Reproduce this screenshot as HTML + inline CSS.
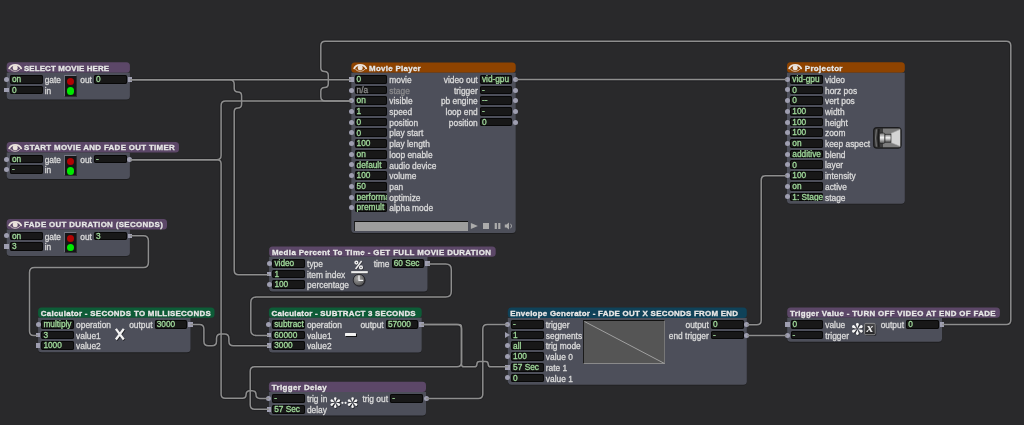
<!DOCTYPE html><html><head><meta charset="utf-8"><style>

html,body{margin:0;padding:0;}
body{width:1024px;height:425px;background:#29292b;position:relative;overflow:hidden;font-family:"Liberation Sans",sans-serif;}
#root{position:absolute;left:0;top:0;width:1024px;height:425px;will-change:transform;}
.tb{position:absolute;height:10.4px;border-radius:3.5px;}
.tt{position:absolute;height:10.4px;line-height:10.4px;padding-top:1.3px;font-size:7.9px;font-weight:bold;color:#e8e8e8;white-space:nowrap;transform-origin:0 50%;text-shadow:0 0 1px rgba(0,0,0,.45);-webkit-text-stroke:0.35px #e8e8e8;}
.bd{position:absolute;background:#4d4f5a;border-radius:0 0 3.5px 3.5px;box-shadow:0 0.8px 0.8px rgba(0,0,0,0.28);}
.fd{position:absolute;height:8.8px;background:#181818;border-radius:2px;box-shadow:inset 0 0 0 0.9px #070707;overflow:hidden;font-size:8.3px;line-height:8.8px;white-space:nowrap;text-indent:2.0px;}
.fd span{position:relative;top:0.2px;-webkit-text-stroke:0.3px currentColor;}
.lb{position:absolute;height:8.8px;line-height:8.8px;padding-top:1px;font-size:8.4px;white-space:nowrap;-webkit-text-stroke:0.3px currentColor;}
.pc{position:absolute;width:5px;height:5px;border-radius:50%;background:#9e9eb0;}
.ps{position:absolute;width:4.8px;height:4.8px;background:#9e9eb0;}

</style></head><body><div id="root">
<svg style="position:absolute;left:0;top:0" width="1024" height="425"><g fill="none" stroke="#1f1f21" stroke-width="3.4" opacity="0.7">
<path d="M130 79.7 L351 79.7"/>
<path d="M130 79.7 L229.70 79.70 Q234.2 79.7 234.20 84.20 L234.20 88.30 Q234.2 92 237.90 92.00 L237.90 92.00 Q241.6 92 241.60 95.70 L241.60 104.30 Q241.6 108 237.90 108.00 L237.90 108.00 Q234.2 108 234.20 111.70 L234.20 270.20 Q234.2 274.7 238.70 274.70 L269 274.7"/>
<path d="M130 159.7 L216.60 159.70 Q221.1 159.7 221.10 155.20 L221.10 105.40 Q221.1 100.9 225.60 100.90 L352 100.9"/>
<path d="M130 159.7 L217.10 159.70 Q221.1 159.7 221.10 163.70 L221.10 394.30 Q221.1 398.3 225.10 398.30 L242.30 398.30 Q246.1 398.3 246.10 394.50 L246.10 394.50 Q246.1 390.7 249.90 390.70 L252.10 390.70 Q256 390.7 256.00 394.60 L256.00 394.60 Q256 398.5 259.90 398.50 L269 398.5"/>
<path d="M130 235.8 L143.40 235.80 Q148.4 235.8 148.40 240.80 L148.40 262.60 Q148.4 267.6 143.40 267.60 L34.50 267.60 Q29.5 267.6 29.50 272.60 L29.50 331.15 Q29.5 335.4 33.75 335.40 L38 335.4"/>
<path d="M190.5 324.5 L199.40 324.50 Q203.9 324.5 203.90 329.00 L203.90 341.30 Q203.9 345.8 208.40 345.80 L212.00 345.80 Q216.5 345.8 216.50 341.30 L216.50 338.50 Q216.5 334 221.00 334.00 L224.40 334.00 Q228.9 334 228.90 338.50 L228.90 341.30 Q228.9 345.8 233.40 345.80 L269 345.8"/>
<path d="M427.5 263.9 L445.80 263.90 Q451.3 263.9 451.30 269.40 L451.30 291.50 Q451.3 297 445.80 297.00 L256.30 297.00 Q250.8 297 250.80 302.50 L250.80 330.00 Q250.8 335.5 256.30 335.50 L269 335.5"/>
<path d="M421.5 324.6 L458.90 324.60 Q461.5 324.6 461.50 327.20 L461.50 364.20 Q461.5 366.8 464.10 366.80 L474.30 366.80 Q476.9 366.8 476.90 364.20 L476.90 364.20 Q476.9 361.6 479.50 361.60 L485.60 361.60 Q488.2 361.6 488.20 364.20 L488.20 364.20 Q488.2 366.8 490.80 366.80 L508 366.8"/>
<path d="M421.5 324.6 L457.00 324.60 Q461.5 324.6 461.50 329.10 L461.50 362.30 Q461.5 366.8 457.00 366.80 L254.70 366.80 Q250.2 366.8 250.20 371.30 L250.20 404.80 Q250.2 409.3 254.70 409.30 L269 409.3"/>
<path d="M426 398.4 L478.30 398.40 Q482.8 398.4 482.80 393.90 L482.80 329.10 Q482.8 324.6 487.30 324.60 L508 324.6"/>
<path d="M747 324.7 L756.70 324.70 Q761.2 324.7 761.20 320.20 L761.20 180.20 Q761.2 175.7 765.70 175.70 L787 175.7"/>
<path d="M747 335.4 L787 335.4"/>
<path d="M942 324.6 L1006.30 324.60 Q1010.8 324.6 1010.80 320.10 L1010.80 45.70 Q1010.8 41.2 1006.30 41.20 L325.30 41.20 Q320.8 41.2 320.80 45.70 L320.80 67.75 Q320.8 71.5 324.55 71.50 L324.55 71.50 Q328.3 71.5 328.30 75.25 L328.30 83.75 Q328.3 87.5 324.55 87.50 L324.55 87.50 Q320.8 87.5 320.80 91.25 L320.80 96.40 Q320.8 100.9 325.30 100.90 L352 100.9"/>
<path d="M515.7 79.5 L787 79.5"/>
</g></svg>
<svg style="position:absolute;left:0;top:0" width="1024" height="425"><rect x="6.7" y="62.3" width="123.2" height="10.4" rx="3.5" fill="#5c4768"/><path d="M6.7 72.7 H129.90 V95.90 Q129.90 99.40 126.40 99.40 H10.20 Q6.7 99.40 6.7 95.90 Z" fill="#000" opacity="0.28" transform="translate(0 0.9)"/><path d="M6.7 72.7 H129.90 V95.90 Q129.90 99.40 126.40 99.40 H10.20 Q6.7 99.40 6.7 95.90 Z" fill="#4d4f5a"/><rect x="6.7" y="142.1" width="172.3" height="10.4" rx="3.5" fill="#5c4768"/><path d="M6.7 152.5 H129.90 V175.50 Q129.90 179.00 126.40 179.00 H10.20 Q6.7 179.00 6.7 175.50 Z" fill="#000" opacity="0.28" transform="translate(0 0.9)"/><path d="M6.7 152.5 H129.90 V175.50 Q129.90 179.00 126.40 179.00 H10.20 Q6.7 179.00 6.7 175.50 Z" fill="#4d4f5a"/><rect x="6.7" y="219.0" width="160.3" height="10.4" rx="3.5" fill="#5c4768"/><path d="M6.7 229.4 H129.90 V252.40 Q129.90 255.90 126.40 255.90 H10.20 Q6.7 255.90 6.7 252.40 Z" fill="#000" opacity="0.28" transform="translate(0 0.9)"/><path d="M6.7 229.4 H129.90 V252.40 Q129.90 255.90 126.40 255.90 H10.20 Q6.7 255.90 6.7 252.40 Z" fill="#4d4f5a"/><rect x="351.3" y="62.4" width="164.4" height="10.4" rx="3.5" fill="#8e4300"/><path d="M351.3 72.8 H515.70 V229.50 Q515.70 233.00 512.20 233.00 H354.80 Q351.3 233.00 351.3 229.50 Z" fill="#000" opacity="0.28" transform="translate(0 0.9)"/><path d="M351.3 72.8 H515.70 V229.50 Q515.70 233.00 512.20 233.00 H354.80 Q351.3 233.00 351.3 229.50 Z" fill="#4d4f5a"/><rect x="787.0" y="62.3" width="117.8" height="10.4" rx="3.5" fill="#8e4300"/><path d="M787.0 72.7 H904.80 V200.20 Q904.80 203.70 901.30 203.70 H790.50 Q787.0 203.70 787.0 200.20 Z" fill="#000" opacity="0.28" transform="translate(0 0.9)"/><path d="M787.0 72.7 H904.80 V200.20 Q904.80 203.70 901.30 203.70 H790.50 Q787.0 203.70 787.0 200.20 Z" fill="#4d4f5a"/><rect x="269.1" y="246.4" width="226.6" height="10.4" rx="3.5" fill="#5c4768"/><path d="M269.1 256.8 H427.50 V288.00 Q427.50 291.50 424.00 291.50 H272.60 Q269.1 291.50 269.1 288.00 Z" fill="#000" opacity="0.28" transform="translate(0 0.9)"/><path d="M269.1 256.8 H427.50 V288.00 Q427.50 291.50 424.00 291.50 H272.60 Q269.1 291.50 269.1 288.00 Z" fill="#4d4f5a"/><rect x="268.9" y="307.4" width="152.8" height="10.4" rx="3.5" fill="#0d5c37"/><path d="M268.9 317.79999999999995 H421.70 V348.90 Q421.70 352.40 418.20 352.40 H272.40 Q268.9 352.40 268.9 348.90 Z" fill="#000" opacity="0.28" transform="translate(0 0.9)"/><path d="M268.9 317.79999999999995 H421.70 V348.90 Q421.70 352.40 418.20 352.40 H272.40 Q268.9 352.40 268.9 348.90 Z" fill="#4d4f5a"/><rect x="268.9" y="381.7" width="157.1" height="10.4" rx="3.5" fill="#5c4768"/><path d="M268.9 392.09999999999997 H426.00 V412.00 Q426.00 415.50 422.50 415.50 H272.40 Q268.9 415.50 268.9 412.00 Z" fill="#000" opacity="0.28" transform="translate(0 0.9)"/><path d="M268.9 392.09999999999997 H426.00 V412.00 Q426.00 415.50 422.50 415.50 H272.40 Q268.9 415.50 268.9 412.00 Z" fill="#4d4f5a"/><rect x="38.1" y="307.4" width="176.4" height="10.4" rx="3.5" fill="#0d5c37"/><path d="M38.1 317.79999999999995 H190.50 V348.80 Q190.50 352.30 187.00 352.30 H41.60 Q38.1 352.30 38.1 348.80 Z" fill="#000" opacity="0.28" transform="translate(0 0.9)"/><path d="M38.1 317.79999999999995 H190.50 V348.80 Q190.50 352.30 187.00 352.30 H41.60 Q38.1 352.30 38.1 348.80 Z" fill="#4d4f5a"/><rect x="507.8" y="307.5" width="239.0" height="10.4" rx="3.5" fill="#0f4259"/><path d="M507.8 317.9 H746.80 V381.20 Q746.80 384.70 743.30 384.70 H511.30 Q507.8 384.70 507.8 381.20 Z" fill="#000" opacity="0.28" transform="translate(0 0.9)"/><path d="M507.8 317.9 H746.80 V381.20 Q746.80 384.70 743.30 384.70 H511.30 Q507.8 384.70 507.8 381.20 Z" fill="#4d4f5a"/><rect x="787.2" y="307.4" width="212.7" height="10.4" rx="3.5" fill="#5c4768"/><path d="M787.2 317.79999999999995 H942.00 V338.30 Q942.00 341.80 938.50 341.80 H790.70 Q787.2 341.80 787.2 338.30 Z" fill="#000" opacity="0.28" transform="translate(0 0.9)"/><path d="M787.2 317.79999999999995 H942.00 V338.30 Q942.00 341.80 938.50 341.80 H790.70 Q787.2 341.80 787.2 338.30 Z" fill="#4d4f5a"/></svg>
<svg style="position:absolute;left:8.1px;top:62.9px" width="15" height="11" viewBox="0 0 15 11">
<path d="M1.2 5.4 C3.4 0.6, 11 0.6, 13.2 5.4" fill="none" stroke="#ebe3dd" stroke-width="1.8" stroke-linecap="round"/>
<path d="M2.2 5.9 C4.4 9.2, 10 9.2, 12.2 5.9" fill="none" stroke="#ebe3dd" stroke-width="0.9" stroke-linecap="round" opacity="0.85"/>
<circle cx="7.2" cy="4.7" r="2.5" fill="#ebe3dd"/></svg>
<div class="tt" style="left:23.9px;top:62.3px;letter-spacing:0.149px">SELECT MOVIE HERE</div>
<div class="fd" style="left:10.0px;top:74.8px;width:32.5px;"><span style="color:#9fd99a">on</span></div>
<div class="lb" style="left:44.7px;top:74.8px;color:#dadada">gate</div>
<div class="pc" style="left:4.2px;top:76.7px"></div>
<div class="fd" style="left:10.0px;top:85.5px;width:32.5px;"><span style="color:#9fd99a">0</span></div>
<div class="lb" style="left:44.7px;top:85.5px;color:#dadada">in</div>
<div class="ps" style="left:4.300000000000001px;top:87.5px"></div>
<div class="fd" style="left:94.10000000000001px;top:74.8px;width:32.5px;"><span style="color:#9fd99a">0</span></div>
<div class="lb" style="right:932.1px;top:74.8px;color:#dadada">out</div>
<div class="ps" style="left:127.5px;top:76.8px"></div>
<div style="position:absolute;left:63.6px;top:75.4px;width:13.2px;height:21.2px;background:#151517;border-style:solid;border-width:1.3px 1px 1px 1.3px;border-color:#777985 #2c2c30 #2c2c30 #6a6c78;box-sizing:border-box"></div>
<div style="position:absolute;left:66.6px;top:78.0px;width:7.4px;height:7.4px;border-radius:50%;background:#b00404"></div>
<div style="position:absolute;left:66.6px;top:87.2px;width:7.6px;height:7.6px;border-radius:50%;background:#00e800"></div>
<svg style="position:absolute;left:8.1px;top:142.7px" width="15" height="11" viewBox="0 0 15 11">
<path d="M1.2 5.4 C3.4 0.6, 11 0.6, 13.2 5.4" fill="none" stroke="#ebe3dd" stroke-width="1.8" stroke-linecap="round"/>
<path d="M2.2 5.9 C4.4 9.2, 10 9.2, 12.2 5.9" fill="none" stroke="#ebe3dd" stroke-width="0.9" stroke-linecap="round" opacity="0.85"/>
<circle cx="7.2" cy="4.7" r="2.5" fill="#ebe3dd"/></svg>
<div class="tt" style="left:24.1px;top:142.1px;letter-spacing:0.329px">START MOVIE AND FADE OUT TIMER</div>
<div class="fd" style="left:10.0px;top:154.6px;width:32.5px;"><span style="color:#9fd99a">on</span></div>
<div class="lb" style="left:44.7px;top:154.6px;color:#dadada">gate</div>
<div class="pc" style="left:4.2px;top:156.5px"></div>
<div class="fd" style="left:10.0px;top:165.29999999999998px;width:32.5px;"><span style="color:#9fd99a">-</span></div>
<div class="lb" style="left:44.7px;top:165.29999999999998px;color:#dadada">in</div>
<div class="pc" style="left:4.2px;top:167.2px"></div>
<div class="fd" style="left:94.10000000000001px;top:154.6px;width:32.5px;"><span style="color:#9fd99a">-</span></div>
<div class="lb" style="right:932.1px;top:154.6px;color:#dadada">out</div>
<div class="pc" style="left:127.4px;top:156.5px"></div>
<div style="position:absolute;left:63.6px;top:155.2px;width:13.2px;height:21.2px;background:#151517;border-style:solid;border-width:1.3px 1px 1px 1.3px;border-color:#777985 #2c2c30 #2c2c30 #6a6c78;box-sizing:border-box"></div>
<div style="position:absolute;left:66.6px;top:157.79999999999998px;width:7.4px;height:7.4px;border-radius:50%;background:#b00404"></div>
<div style="position:absolute;left:66.6px;top:167.0px;width:7.6px;height:7.6px;border-radius:50%;background:#00e800"></div>
<svg style="position:absolute;left:8.1px;top:219.6px" width="15" height="11" viewBox="0 0 15 11">
<path d="M1.2 5.4 C3.4 0.6, 11 0.6, 13.2 5.4" fill="none" stroke="#ebe3dd" stroke-width="1.8" stroke-linecap="round"/>
<path d="M2.2 5.9 C4.4 9.2, 10 9.2, 12.2 5.9" fill="none" stroke="#ebe3dd" stroke-width="0.9" stroke-linecap="round" opacity="0.85"/>
<circle cx="7.2" cy="4.7" r="2.5" fill="#ebe3dd"/></svg>
<div class="tt" style="left:24.1px;top:219.0px;letter-spacing:0.349px">FADE OUT DURATION (SECONDS)</div>
<div class="fd" style="left:10.0px;top:231.5px;width:32.5px;"><span style="color:#9fd99a">on</span></div>
<div class="lb" style="left:44.7px;top:231.5px;color:#dadada">gate</div>
<div class="pc" style="left:4.2px;top:233.4px"></div>
<div class="fd" style="left:10.0px;top:242.2px;width:32.5px;"><span style="color:#9fd99a">3</span></div>
<div class="lb" style="left:44.7px;top:242.2px;color:#dadada">in</div>
<div class="ps" style="left:4.300000000000001px;top:244.2px"></div>
<div class="fd" style="left:94.10000000000001px;top:231.5px;width:32.5px;"><span style="color:#9fd99a">3</span></div>
<div class="lb" style="right:932.1px;top:231.5px;color:#dadada">out</div>
<div class="ps" style="left:127.5px;top:233.5px"></div>
<div style="position:absolute;left:63.6px;top:232.0px;width:13.2px;height:21.2px;background:#151517;border-style:solid;border-width:1.3px 1px 1px 1.3px;border-color:#777985 #2c2c30 #2c2c30 #6a6c78;box-sizing:border-box"></div>
<div style="position:absolute;left:66.6px;top:234.6px;width:7.4px;height:7.4px;border-radius:50%;background:#b00404"></div>
<div style="position:absolute;left:66.6px;top:243.8px;width:7.6px;height:7.6px;border-radius:50%;background:#00e800"></div>
<svg style="position:absolute;left:352.7px;top:63.0px" width="15" height="11" viewBox="0 0 15 11">
<path d="M1.2 5.4 C3.4 0.6, 11 0.6, 13.2 5.4" fill="none" stroke="#ebe3dd" stroke-width="1.8" stroke-linecap="round"/>
<path d="M2.2 5.9 C4.4 9.2, 10 9.2, 12.2 5.9" fill="none" stroke="#ebe3dd" stroke-width="0.9" stroke-linecap="round" opacity="0.85"/>
<circle cx="7.2" cy="4.7" r="2.5" fill="#ebe3dd"/></svg>
<div class="tt" style="left:369.1px;top:62.4px;letter-spacing:0.300px">Movie Player</div>
<div class="fd" style="left:354.6px;top:74.9px;width:32.5px;"><span style="color:#9fd99a">0</span></div>
<div class="lb" style="left:389.3px;top:74.9px;color:#dadada">movie</div>
<div class="ps" style="left:348.90000000000003px;top:76.9px"></div>
<div class="fd" style="left:354.6px;top:85.60000000000001px;width:32.5px;"><span style="color:#8a8a8a">n/a</span></div>
<div class="lb" style="left:389.3px;top:85.60000000000001px;color:#8a8a8c">stage</div>
<div class="pc" style="left:348.8px;top:87.50000000000001px"></div>
<div class="fd" style="left:354.6px;top:96.30000000000001px;width:32.5px;"><span style="color:#9fd99a">on</span></div>
<div class="lb" style="left:389.3px;top:96.30000000000001px;color:#dadada">visible</div>
<div class="pc" style="left:348.8px;top:98.20000000000002px"></div>
<div class="fd" style="left:354.6px;top:107.0px;width:32.5px;"><span style="color:#9fd99a">1</span></div>
<div class="lb" style="left:389.3px;top:107.0px;color:#dadada">speed</div>
<div class="pc" style="left:348.8px;top:108.9px"></div>
<div class="fd" style="left:354.6px;top:117.7px;width:32.5px;"><span style="color:#9fd99a">0</span></div>
<div class="lb" style="left:389.3px;top:117.7px;color:#dadada">position</div>
<div class="pc" style="left:348.8px;top:119.60000000000001px"></div>
<div class="fd" style="left:354.6px;top:128.4px;width:32.5px;"><span style="color:#9fd99a">0</span></div>
<div class="lb" style="left:389.3px;top:128.4px;color:#dadada">play start</div>
<div class="pc" style="left:348.8px;top:130.3px"></div>
<div class="fd" style="left:354.6px;top:139.1px;width:32.5px;"><span style="color:#9fd99a">100</span></div>
<div class="lb" style="left:389.3px;top:139.1px;color:#dadada">play length</div>
<div class="pc" style="left:348.8px;top:141.0px"></div>
<div class="fd" style="left:354.6px;top:149.8px;width:32.5px;"><span style="color:#9fd99a">on</span></div>
<div class="lb" style="left:389.3px;top:149.8px;color:#dadada">loop enable</div>
<div class="pc" style="left:348.8px;top:151.70000000000002px"></div>
<div class="fd" style="left:354.6px;top:160.5px;width:32.5px;"><span style="color:#9fd99a">default</span></div>
<div class="lb" style="left:389.3px;top:160.5px;color:#dadada">audio device</div>
<div class="pc" style="left:348.8px;top:162.4px"></div>
<div class="fd" style="left:354.6px;top:171.2px;width:32.5px;"><span style="color:#9fd99a">100</span></div>
<div class="lb" style="left:389.3px;top:171.2px;color:#dadada">volume</div>
<div class="pc" style="left:348.8px;top:173.1px"></div>
<div class="fd" style="left:354.6px;top:181.9px;width:32.5px;"><span style="color:#9fd99a">50</span></div>
<div class="lb" style="left:389.3px;top:181.9px;color:#dadada">pan</div>
<div class="pc" style="left:348.8px;top:183.8px"></div>
<div class="fd" style="left:354.6px;top:192.6px;width:32.5px;"><span style="color:#9fd99a">performance</span></div>
<div class="lb" style="left:389.3px;top:192.6px;color:#dadada">optimize</div>
<div class="pc" style="left:348.8px;top:194.5px"></div>
<div class="fd" style="left:354.6px;top:203.29999999999998px;width:32.5px;"><span style="color:#9fd99a">premult</span></div>
<div class="lb" style="left:389.3px;top:203.29999999999998px;color:#dadada">alpha mode</div>
<div class="pc" style="left:348.8px;top:205.2px"></div>
<div class="fd" style="left:479.9000000000001px;top:74.9px;width:32.5px;"><span style="color:#9fd99a">vid-gpu</span></div>
<div class="lb" style="right:546.3px;top:74.9px;color:#dadada">video out</div>
<div class="pc" style="left:513.2px;top:76.80000000000001px"></div>
<div class="fd" style="left:479.9000000000001px;top:85.60000000000001px;width:32.5px;"><span style="color:#9fd99a">-</span></div>
<div class="lb" style="right:546.3px;top:85.60000000000001px;color:#dadada">trigger</div>
<div class="pc" style="left:513.2px;top:87.50000000000001px"></div>
<div class="fd" style="left:479.9000000000001px;top:96.30000000000001px;width:32.5px;"><span style="color:#9fd99a">--</span></div>
<div class="lb" style="right:546.3px;top:96.30000000000001px;color:#dadada">pb engine</div>
<div class="pc" style="left:513.2px;top:98.20000000000002px"></div>
<div class="fd" style="left:479.9000000000001px;top:107.0px;width:32.5px;"><span style="color:#9fd99a">-</span></div>
<div class="lb" style="right:546.3px;top:107.0px;color:#dadada">loop end</div>
<div class="pc" style="left:513.2px;top:108.9px"></div>
<div class="fd" style="left:479.9000000000001px;top:117.7px;width:32.5px;"><span style="color:#9fd99a">0</span></div>
<div class="lb" style="right:546.3px;top:117.7px;color:#dadada">position</div>
<div class="pc" style="left:513.2px;top:119.60000000000001px"></div>
<div style="position:absolute;left:353.6px;top:220.9px;width:114.1px;height:9.8px;background:#9d9d9d;border-top:1px solid #111;border-left:1px solid #222;box-sizing:border-box"></div>
<svg style="position:absolute;left:468px;top:220px" width="48" height="12" viewBox="0 0 48 12">
<path d="M2.9 2.9 L9.9 6 L2.9 9.1 Z" fill="#ababab"/>
<rect x="15" y="3" width="6" height="6" fill="#ababab"/>
<rect x="26.7" y="3" width="2.2" height="6" fill="#ababab"/><rect x="30.2" y="3" width="2.2" height="6" fill="#ababab"/>
<path d="M36.8 4.6 L38.5 4.6 L41 2.6 L41 9.4 L38.5 7.4 L36.8 7.4 Z" fill="#ababab"/>
<path d="M42.6 3.8 Q44.6 6 42.6 8.2" fill="none" stroke="#ababab" stroke-width="0.9"/>
</svg>
<svg style="position:absolute;left:788.4px;top:62.9px" width="15" height="11" viewBox="0 0 15 11">
<path d="M1.2 5.4 C3.4 0.6, 11 0.6, 13.2 5.4" fill="none" stroke="#ebe3dd" stroke-width="1.8" stroke-linecap="round"/>
<path d="M2.2 5.9 C4.4 9.2, 10 9.2, 12.2 5.9" fill="none" stroke="#ebe3dd" stroke-width="0.9" stroke-linecap="round" opacity="0.85"/>
<circle cx="7.2" cy="4.7" r="2.5" fill="#ebe3dd"/></svg>
<div class="tt" style="left:804.8px;top:62.3px;letter-spacing:0.369px">Projector</div>
<div class="fd" style="left:790.3px;top:74.8px;width:32.5px;"><span style="color:#9fd99a">vid-gpu</span></div>
<div class="lb" style="left:825.0px;top:74.8px;color:#dadada">video</div>
<div class="pc" style="left:784.5px;top:76.7px"></div>
<div class="fd" style="left:790.3px;top:85.5px;width:32.5px;"><span style="color:#9fd99a">0</span></div>
<div class="lb" style="left:825.0px;top:85.5px;color:#dadada">horz pos</div>
<div class="pc" style="left:784.5px;top:87.4px"></div>
<div class="fd" style="left:790.3px;top:96.19999999999999px;width:32.5px;"><span style="color:#9fd99a">0</span></div>
<div class="lb" style="left:825.0px;top:96.19999999999999px;color:#dadada">vert pos</div>
<div class="pc" style="left:784.5px;top:98.1px"></div>
<div class="fd" style="left:790.3px;top:106.89999999999999px;width:32.5px;"><span style="color:#9fd99a">100</span></div>
<div class="lb" style="left:825.0px;top:106.89999999999999px;color:#dadada">width</div>
<div class="pc" style="left:784.5px;top:108.8px"></div>
<div class="fd" style="left:790.3px;top:117.6px;width:32.5px;"><span style="color:#9fd99a">100</span></div>
<div class="lb" style="left:825.0px;top:117.6px;color:#dadada">height</div>
<div class="pc" style="left:784.5px;top:119.5px"></div>
<div class="fd" style="left:790.3px;top:128.3px;width:32.5px;"><span style="color:#9fd99a">100</span></div>
<div class="lb" style="left:825.0px;top:128.3px;color:#dadada">zoom</div>
<div class="pc" style="left:784.5px;top:130.20000000000002px"></div>
<div class="fd" style="left:790.3px;top:139.0px;width:32.5px;"><span style="color:#9fd99a">on</span></div>
<div class="lb" style="left:825.0px;top:139.0px;color:#dadada">keep aspect</div>
<div class="pc" style="left:784.5px;top:140.9px"></div>
<div class="fd" style="left:790.3px;top:149.7px;width:32.5px;"><span style="color:#9fd99a">additive</span></div>
<div class="lb" style="left:825.0px;top:149.7px;color:#dadada">blend</div>
<div class="pc" style="left:784.5px;top:151.6px"></div>
<div class="fd" style="left:790.3px;top:160.39999999999998px;width:32.5px;"><span style="color:#9fd99a">0</span></div>
<div class="lb" style="left:825.0px;top:160.39999999999998px;color:#dadada">layer</div>
<div class="pc" style="left:784.5px;top:162.29999999999998px"></div>
<div class="fd" style="left:790.3px;top:171.1px;width:32.5px;"><span style="color:#9fd99a">100</span></div>
<div class="lb" style="left:825.0px;top:171.1px;color:#dadada">intensity</div>
<div class="pc" style="left:784.5px;top:173.0px"></div>
<div class="fd" style="left:790.3px;top:181.8px;width:32.5px;"><span style="color:#9fd99a">on</span></div>
<div class="lb" style="left:825.0px;top:181.8px;color:#dadada">active</div>
<div class="pc" style="left:784.5px;top:183.70000000000002px"></div>
<div class="fd" style="left:790.3px;top:192.5px;width:32.5px;"><span style="color:#9fd99a">1: Stage</span></div>
<div class="lb" style="left:825.0px;top:192.5px;color:#dadada">stage</div>
<div class="pc" style="left:784.5px;top:194.4px"></div>
<div class="tt" style="left:271.9px;top:246.4px;letter-spacing:0.379px">Media Percent To Time - GET FULL MOVIE DURATION</div>
<div class="fd" style="left:272.40000000000003px;top:258.9px;width:32.5px;"><span style="color:#9fd99a">video</span></div>
<div class="lb" style="left:307.1px;top:258.9px;color:#dadada">type</div>
<div class="pc" style="left:266.6px;top:260.79999999999995px"></div>
<div class="fd" style="left:272.40000000000003px;top:269.59999999999997px;width:32.5px;"><span style="color:#9fd99a">1</span></div>
<div class="lb" style="left:307.1px;top:269.59999999999997px;color:#dadada">item index</div>
<div class="ps" style="left:266.70000000000005px;top:271.59999999999997px"></div>
<div class="fd" style="left:272.40000000000003px;top:280.29999999999995px;width:32.5px;"><span style="color:#9fd99a">100</span></div>
<div class="lb" style="left:307.1px;top:280.29999999999995px;color:#dadada">percentage</div>
<div class="pc" style="left:266.6px;top:282.19999999999993px"></div>
<div class="fd" style="left:391.7px;top:258.9px;width:32.5px;"><span style="color:#9fd99a">60 Sec</span></div>
<div class="lb" style="right:634.5px;top:258.9px;color:#dadada">time</div>
<div class="ps" style="left:425.1px;top:260.9px"></div>
<div class="tt" style="left:271.6px;top:307.4px;letter-spacing:0.240px">Calculator - SUBTRACT 3 SECONDS</div>
<div class="fd" style="left:272.2px;top:319.9px;width:32.5px;"><span style="color:#9fd99a">subtract</span></div>
<div class="lb" style="left:306.9px;top:319.9px;color:#dadada">operation</div>
<div class="pc" style="left:266.4px;top:321.79999999999995px"></div>
<div class="fd" style="left:272.2px;top:330.59999999999997px;width:32.5px;"><span style="color:#9fd99a">60000</span></div>
<div class="lb" style="left:306.9px;top:330.59999999999997px;color:#dadada">value1</div>
<div class="ps" style="left:266.5px;top:332.59999999999997px"></div>
<div class="fd" style="left:272.2px;top:341.29999999999995px;width:32.5px;"><span style="color:#9fd99a">3000</span></div>
<div class="lb" style="left:306.9px;top:341.29999999999995px;color:#dadada">value2</div>
<div class="ps" style="left:266.5px;top:343.29999999999995px"></div>
<div class="fd" style="left:385.9px;top:319.9px;width:32.5px;"><span style="color:#9fd99a">57000</span></div>
<div class="lb" style="right:640.3px;top:319.9px;color:#dadada">output</div>
<div class="ps" style="left:419.3px;top:321.9px"></div>
<div class="tt" style="left:271.7px;top:381.7px;letter-spacing:0.411px">Trigger Delay</div>
<div class="fd" style="left:272.2px;top:394.2px;width:32.5px;"><span style="color:#9fd99a">-</span></div>
<div class="lb" style="left:306.9px;top:394.2px;color:#dadada">trig in</div>
<div class="pc" style="left:266.4px;top:396.09999999999997px"></div>
<div class="fd" style="left:272.2px;top:404.9px;width:32.5px;"><span style="color:#9fd99a">57 Sec</span></div>
<div class="lb" style="left:306.9px;top:404.9px;color:#dadada">delay</div>
<div class="ps" style="left:266.5px;top:406.9px"></div>
<div class="fd" style="left:390.2px;top:394.2px;width:32.5px;"><span style="color:#9fd99a">-</span></div>
<div class="lb" style="right:636.0px;top:394.2px;color:#dadada">trig out</div>
<div class="pc" style="left:423.5px;top:396.09999999999997px"></div>
<div class="tt" style="left:40.7px;top:307.4px;letter-spacing:0.305px">Calculator - SECONDS TO MILLISECONDS</div>
<div class="fd" style="left:41.4px;top:319.9px;width:32.5px;"><span style="color:#9fd99a">multiply</span></div>
<div class="lb" style="left:76.10000000000001px;top:319.9px;color:#dadada">operation</div>
<div class="pc" style="left:35.6px;top:321.79999999999995px"></div>
<div class="fd" style="left:41.4px;top:330.59999999999997px;width:32.5px;"><span style="color:#9fd99a">3</span></div>
<div class="lb" style="left:76.10000000000001px;top:330.59999999999997px;color:#dadada">value1</div>
<div class="ps" style="left:35.7px;top:332.59999999999997px"></div>
<div class="fd" style="left:41.4px;top:341.29999999999995px;width:32.5px;"><span style="color:#9fd99a">1000</span></div>
<div class="lb" style="left:76.10000000000001px;top:341.29999999999995px;color:#dadada">value2</div>
<div class="ps" style="left:35.7px;top:343.29999999999995px"></div>
<div class="fd" style="left:154.7px;top:319.9px;width:32.5px;"><span style="color:#9fd99a">3000</span></div>
<div class="lb" style="right:871.5px;top:319.9px;color:#dadada">output</div>
<div class="ps" style="left:188.1px;top:321.9px"></div>
<div class="tt" style="left:510.2px;top:307.5px;letter-spacing:0.277px">Envelope Generator - FADE OUT X SECONDS FROM END</div>
<div class="fd" style="left:511.1px;top:320.0px;width:32.5px;"><span style="color:#9fd99a">-</span></div>
<div class="lb" style="left:545.8000000000001px;top:320.0px;color:#dadada">trigger</div>
<div class="pc" style="left:505.3px;top:321.9px"></div>
<div class="fd" style="left:511.1px;top:330.7px;width:32.5px;"><span style="color:#9fd99a">1</span></div>
<div class="lb" style="left:545.8000000000001px;top:330.7px;color:#dadada">segments</div>
<svg style="position:absolute;left:505.3px;top:332.09999999999997px" width="5" height="6"><path d="M0 0 L5 3 L0 6 Z" fill="#9e9eb0"/></svg>
<div class="fd" style="left:511.1px;top:341.4px;width:32.5px;"><span style="color:#9fd99a">all</span></div>
<div class="lb" style="left:545.8000000000001px;top:341.4px;color:#dadada">trig mode</div>
<div class="pc" style="left:505.3px;top:343.29999999999995px"></div>
<div class="fd" style="left:511.1px;top:352.1px;width:32.5px;"><span style="color:#9fd99a">100</span></div>
<div class="lb" style="left:545.8000000000001px;top:352.1px;color:#dadada">value 0</div>
<div class="pc" style="left:505.3px;top:354.0px"></div>
<div class="fd" style="left:511.1px;top:362.8px;width:32.5px;"><span style="color:#9fd99a">57 Sec</span></div>
<div class="lb" style="left:545.8000000000001px;top:362.8px;color:#dadada">rate 1</div>
<div class="ps" style="left:505.40000000000003px;top:364.8px"></div>
<div class="fd" style="left:511.1px;top:373.5px;width:32.5px;"><span style="color:#9fd99a">0</span></div>
<div class="lb" style="left:545.8000000000001px;top:373.5px;color:#dadada">value 1</div>
<div class="pc" style="left:505.3px;top:375.4px"></div>
<div class="fd" style="left:711.0px;top:320.0px;width:32.5px;"><span style="color:#9fd99a">0</span></div>
<div class="lb" style="right:315.20000000000005px;top:320.0px;color:#dadada">output</div>
<div class="pc" style="left:744.3px;top:321.9px"></div>
<div class="fd" style="left:711.0px;top:330.7px;width:32.5px;"><span style="color:#9fd99a">-</span></div>
<div class="lb" style="right:315.20000000000005px;top:330.7px;color:#dadada">end trigger</div>
<div class="pc" style="left:744.3px;top:332.59999999999997px"></div>
<div style="position:absolute;left:583.1px;top:319.5px;width:82.2px;height:44.5px;background:#555;border-style:solid;border-width:1.5px 1px 1px 1.5px;border-color:#111 #777 #8a8a8a #1a1a1a;box-sizing:border-box"></div>
<svg style="position:absolute;left:583px;top:319.5px" width="83" height="45"><path d="M1.5 1.5 L81.5 43.5" stroke="#a0a0a0" stroke-width="1"/></svg>
<div class="tt" style="left:790.1px;top:307.4px;letter-spacing:0.345px">Trigger Value - TURN OFF VIDEO AT END OF FADE</div>
<div class="fd" style="left:790.5px;top:319.9px;width:32.5px;"><span style="color:#9fd99a">0</span></div>
<div class="lb" style="left:825.2px;top:319.9px;color:#dadada">value</div>
<div class="ps" style="left:784.8000000000001px;top:321.9px"></div>
<div class="fd" style="left:790.5px;top:330.59999999999997px;width:32.5px;"><span style="color:#9fd99a">-</span></div>
<div class="lb" style="left:825.2px;top:330.59999999999997px;color:#dadada">trigger</div>
<div class="pc" style="left:784.7px;top:332.49999999999994px"></div>
<div class="fd" style="left:906.2px;top:319.9px;width:32.5px;"><span style="color:#9fd99a">0</span></div>
<div class="lb" style="right:120.0px;top:319.9px;color:#dadada">output</div>
<div class="ps" style="left:939.6px;top:321.9px"></div>
<svg style="position:absolute;left:345px;top:255px" width="30" height="35" viewBox="0 0 30 35">
<defs><radialGradient id="clk" cx="0.4" cy="0.35" r="0.7"><stop offset="0" stop-color="#a8a8a8"/><stop offset="1" stop-color="#4a4a4a"/></radialGradient></defs>
<g fill="none" stroke="#1c1c20" stroke-opacity="0.55" stroke-width="1.7"><path d="M17.2 6.6 L11.2 14.6"/><circle cx="12.0" cy="8.2" r="1.35"/><circle cx="16.6" cy="13.0" r="1.35"/></g>
<g fill="none" stroke="#ececec" stroke-width="1.5"><path d="M16.6 6.0 L10.6 14.0"/><circle cx="11.4" cy="7.6" r="1.35"/><circle cx="16.0" cy="12.4" r="1.35"/></g>
<rect x="6.6" y="16.6" width="16.6" height="2.3" fill="#111" opacity="0.55"/>
<rect x="6.2" y="16.1" width="16.6" height="2.2" fill="#eeeeee"/>
<circle cx="14.4" cy="25.5" r="6.2" fill="#1e1e22" opacity="0.6"/>
<circle cx="14" cy="25.1" r="5.8" fill="url(#clk)" stroke="#202024" stroke-width="0.8"/>
<path d="M14 20.4 L14 25.4 L18.2 25.4" fill="none" stroke="#f4f4f4" stroke-width="1.3"/>
</svg>
<div style="position:absolute;left:345.6px;top:334.3px;width:11.6px;height:3px;background:#000;opacity:.75"></div>
<div style="position:absolute;left:344.6px;top:333.2px;width:11.6px;height:2.9px;background:#f2f2f2;border-radius:0.6px"></div>
<svg style="position:absolute;left:112px;top:326px" width="16" height="16" viewBox="0 0 16 16">
<path d="M4.6 3.6 L12.4 14.2 M12.4 3.6 L4.6 14.2" stroke="#000" stroke-opacity="0.6" stroke-width="2.4"/>
<path d="M3.9 2.9 L11.8 13.5 M11.8 2.9 L3.9 13.5" stroke="#f4f4f4" stroke-width="2.3"/>
</svg>
<svg style="position:absolute;left:325px;top:392px" width="35" height="22" viewBox="0 0 35 22">
<g fill="#000" opacity="0.55"><g transform="translate(11.0 11.4)"><path d="M0 -0.54 C-0.52 -2.43 -1.30 -3.32 -1.30 -4.10 A1.30 1.30 0 0 1 1.30 -4.10 C1.30 -3.32 0.52 -2.43 0 -0.54 Z" transform="rotate(0)"/><path d="M0 -0.54 C-0.52 -2.43 -1.30 -3.32 -1.30 -4.10 A1.30 1.30 0 0 1 1.30 -4.10 C1.30 -3.32 0.52 -2.43 0 -0.54 Z" transform="rotate(-60)"/><path d="M0 -0.54 C-0.52 -2.43 -1.30 -3.32 -1.30 -4.10 A1.30 1.30 0 0 1 1.30 -4.10 C1.30 -3.32 0.52 -2.43 0 -0.54 Z" transform="rotate(-120)"/><path d="M0 -0.54 C-0.52 -2.43 -1.30 -3.32 -1.30 -4.10 A1.30 1.30 0 0 1 1.30 -4.10 C1.30 -3.32 0.52 -2.43 0 -0.54 Z" transform="rotate(-180)"/><path d="M0 -0.54 C-0.52 -2.43 -1.30 -3.32 -1.30 -4.10 A1.30 1.30 0 0 1 1.30 -4.10 C1.30 -3.32 0.52 -2.43 0 -0.54 Z" transform="rotate(60)"/><path d="M0 -0.54 C-0.52 -2.43 -1.30 -3.32 -1.30 -4.10 A1.30 1.30 0 0 1 1.30 -4.10 C1.30 -3.32 0.52 -2.43 0 -0.54 Z" transform="rotate(120)"/></g><g transform="translate(28.3 11.4)"><path d="M0 -0.54 C-0.52 -2.43 -1.30 -3.32 -1.30 -4.10 A1.30 1.30 0 0 1 1.30 -4.10 C1.30 -3.32 0.52 -2.43 0 -0.54 Z" transform="rotate(0)"/><path d="M0 -0.54 C-0.52 -2.43 -1.30 -3.32 -1.30 -4.10 A1.30 1.30 0 0 1 1.30 -4.10 C1.30 -3.32 0.52 -2.43 0 -0.54 Z" transform="rotate(-60)"/><path d="M0 -0.54 C-0.52 -2.43 -1.30 -3.32 -1.30 -4.10 A1.30 1.30 0 0 1 1.30 -4.10 C1.30 -3.32 0.52 -2.43 0 -0.54 Z" transform="rotate(-120)"/><path d="M0 -0.54 C-0.52 -2.43 -1.30 -3.32 -1.30 -4.10 A1.30 1.30 0 0 1 1.30 -4.10 C1.30 -3.32 0.52 -2.43 0 -0.54 Z" transform="rotate(-180)"/><path d="M0 -0.54 C-0.52 -2.43 -1.30 -3.32 -1.30 -4.10 A1.30 1.30 0 0 1 1.30 -4.10 C1.30 -3.32 0.52 -2.43 0 -0.54 Z" transform="rotate(60)"/><path d="M0 -0.54 C-0.52 -2.43 -1.30 -3.32 -1.30 -4.10 A1.30 1.30 0 0 1 1.30 -4.10 C1.30 -3.32 0.52 -2.43 0 -0.54 Z" transform="rotate(120)"/></g></g>
<g fill="#f4f4f4"><g transform="translate(10.3 10.6)"><path d="M0 -0.54 C-0.52 -2.43 -1.30 -3.32 -1.30 -4.10 A1.30 1.30 0 0 1 1.30 -4.10 C1.30 -3.32 0.52 -2.43 0 -0.54 Z" transform="rotate(0)"/><path d="M0 -0.54 C-0.52 -2.43 -1.30 -3.32 -1.30 -4.10 A1.30 1.30 0 0 1 1.30 -4.10 C1.30 -3.32 0.52 -2.43 0 -0.54 Z" transform="rotate(-60)"/><path d="M0 -0.54 C-0.52 -2.43 -1.30 -3.32 -1.30 -4.10 A1.30 1.30 0 0 1 1.30 -4.10 C1.30 -3.32 0.52 -2.43 0 -0.54 Z" transform="rotate(-120)"/><path d="M0 -0.54 C-0.52 -2.43 -1.30 -3.32 -1.30 -4.10 A1.30 1.30 0 0 1 1.30 -4.10 C1.30 -3.32 0.52 -2.43 0 -0.54 Z" transform="rotate(-180)"/><path d="M0 -0.54 C-0.52 -2.43 -1.30 -3.32 -1.30 -4.10 A1.30 1.30 0 0 1 1.30 -4.10 C1.30 -3.32 0.52 -2.43 0 -0.54 Z" transform="rotate(60)"/><path d="M0 -0.54 C-0.52 -2.43 -1.30 -3.32 -1.30 -4.10 A1.30 1.30 0 0 1 1.30 -4.10 C1.30 -3.32 0.52 -2.43 0 -0.54 Z" transform="rotate(120)"/></g><g transform="translate(27.6 10.6)"><path d="M0 -0.54 C-0.52 -2.43 -1.30 -3.32 -1.30 -4.10 A1.30 1.30 0 0 1 1.30 -4.10 C1.30 -3.32 0.52 -2.43 0 -0.54 Z" transform="rotate(0)"/><path d="M0 -0.54 C-0.52 -2.43 -1.30 -3.32 -1.30 -4.10 A1.30 1.30 0 0 1 1.30 -4.10 C1.30 -3.32 0.52 -2.43 0 -0.54 Z" transform="rotate(-60)"/><path d="M0 -0.54 C-0.52 -2.43 -1.30 -3.32 -1.30 -4.10 A1.30 1.30 0 0 1 1.30 -4.10 C1.30 -3.32 0.52 -2.43 0 -0.54 Z" transform="rotate(-120)"/><path d="M0 -0.54 C-0.52 -2.43 -1.30 -3.32 -1.30 -4.10 A1.30 1.30 0 0 1 1.30 -4.10 C1.30 -3.32 0.52 -2.43 0 -0.54 Z" transform="rotate(-180)"/><path d="M0 -0.54 C-0.52 -2.43 -1.30 -3.32 -1.30 -4.10 A1.30 1.30 0 0 1 1.30 -4.10 C1.30 -3.32 0.52 -2.43 0 -0.54 Z" transform="rotate(60)"/><path d="M0 -0.54 C-0.52 -2.43 -1.30 -3.32 -1.30 -4.10 A1.30 1.30 0 0 1 1.30 -4.10 C1.30 -3.32 0.52 -2.43 0 -0.54 Z" transform="rotate(120)"/></g></g>
<circle cx="17.4" cy="10.8" r="1.1" fill="#f0f0f0"/><circle cx="20.6" cy="10.8" r="1.1" fill="#f0f0f0"/>
</svg>
<svg style="position:absolute;left:848px;top:320px" width="30" height="18" viewBox="0 0 30 18">
<g fill="#000" opacity="0.5"><g transform="translate(10.1 9.6)"><path d="M0 -0.60 C-0.58 -2.70 -1.45 -3.68 -1.45 -4.55 A1.45 1.45 0 0 1 1.45 -4.55 C1.45 -3.68 0.58 -2.70 0 -0.60 Z" transform="rotate(0)"/><path d="M0 -0.60 C-0.58 -2.70 -1.45 -3.68 -1.45 -4.55 A1.45 1.45 0 0 1 1.45 -4.55 C1.45 -3.68 0.58 -2.70 0 -0.60 Z" transform="rotate(-60)"/><path d="M0 -0.60 C-0.58 -2.70 -1.45 -3.68 -1.45 -4.55 A1.45 1.45 0 0 1 1.45 -4.55 C1.45 -3.68 0.58 -2.70 0 -0.60 Z" transform="rotate(-120)"/><path d="M0 -0.60 C-0.58 -2.70 -1.45 -3.68 -1.45 -4.55 A1.45 1.45 0 0 1 1.45 -4.55 C1.45 -3.68 0.58 -2.70 0 -0.60 Z" transform="rotate(-180)"/><path d="M0 -0.60 C-0.58 -2.70 -1.45 -3.68 -1.45 -4.55 A1.45 1.45 0 0 1 1.45 -4.55 C1.45 -3.68 0.58 -2.70 0 -0.60 Z" transform="rotate(60)"/><path d="M0 -0.60 C-0.58 -2.70 -1.45 -3.68 -1.45 -4.55 A1.45 1.45 0 0 1 1.45 -4.55 C1.45 -3.68 0.58 -2.70 0 -0.60 Z" transform="rotate(120)"/></g></g>
<g fill="#f6f6f6"><g transform="translate(9.4 8.9)"><path d="M0 -0.60 C-0.58 -2.70 -1.45 -3.68 -1.45 -4.55 A1.45 1.45 0 0 1 1.45 -4.55 C1.45 -3.68 0.58 -2.70 0 -0.60 Z" transform="rotate(0)"/><path d="M0 -0.60 C-0.58 -2.70 -1.45 -3.68 -1.45 -4.55 A1.45 1.45 0 0 1 1.45 -4.55 C1.45 -3.68 0.58 -2.70 0 -0.60 Z" transform="rotate(-60)"/><path d="M0 -0.60 C-0.58 -2.70 -1.45 -3.68 -1.45 -4.55 A1.45 1.45 0 0 1 1.45 -4.55 C1.45 -3.68 0.58 -2.70 0 -0.60 Z" transform="rotate(-120)"/><path d="M0 -0.60 C-0.58 -2.70 -1.45 -3.68 -1.45 -4.55 A1.45 1.45 0 0 1 1.45 -4.55 C1.45 -3.68 0.58 -2.70 0 -0.60 Z" transform="rotate(-180)"/><path d="M0 -0.60 C-0.58 -2.70 -1.45 -3.68 -1.45 -4.55 A1.45 1.45 0 0 1 1.45 -4.55 C1.45 -3.68 0.58 -2.70 0 -0.60 Z" transform="rotate(60)"/><path d="M0 -0.60 C-0.58 -2.70 -1.45 -3.68 -1.45 -4.55 A1.45 1.45 0 0 1 1.45 -4.55 C1.45 -3.68 0.58 -2.70 0 -0.60 Z" transform="rotate(120)"/></g></g>
<rect x="17.4" y="4.2" width="10.9" height="11.6" rx="1.2" fill="#000" opacity="0.5"/>
<defs><linearGradient id="xb" x1="0" y1="0" x2="0" y2="1"><stop offset="0" stop-color="#4a4a4c"/><stop offset="1" stop-color="#262628"/></linearGradient></defs>
<rect x="16.6" y="3.4" width="10.6" height="11.3" rx="1.2" fill="url(#xb)" stroke="#8e8e90" stroke-width="0.9"/>
<text x="21.9" y="12.4" text-anchor="middle" font-family="Liberation Serif" font-style="italic" font-weight="bold" font-size="13.5" fill="#eeeeee">x</text>
</svg>
<svg style="position:absolute;left:873px;top:127px" width="29" height="22" viewBox="0 0 29 22">
<defs>
<linearGradient id="lens" x1="0" y1="0" x2="0" y2="1"><stop offset="0" stop-color="#707070"/><stop offset="0.45" stop-color="#f4f4f4"/><stop offset="1" stop-color="#505050"/></linearGradient>
</defs>
<rect x="0.6" y="0.6" width="27.6" height="20.6" rx="2.6" fill="#262626" stroke="#111" stroke-width="0.8"/>
<rect x="1.6" y="1.6" width="25.6" height="18.6" rx="2" fill="#3c3c3c"/>
<path d="M3.4 2.4 Q1.8 11 3.4 19.6" fill="none" stroke="#777" stroke-width="1"/>
<path d="M6 2 Q4.2 11 6 20" fill="none" stroke="#1a1a1a" stroke-width="1.6"/>
<rect x="10" y="1.6" width="17.2" height="18.6" fill="#7c7c7c"/>
<path d="M18 6.4 L27.2 2.4 L27.2 19.2 L18 15.6 Z" fill="#d4d4d4"/>
<path d="M18 6.4 L27.2 2.4 M18 15.6 L27.2 19.2" stroke="#b0b0b0" stroke-width="0.6"/>
<rect x="6.5" y="6" width="5.4" height="10.4" rx="1.4" fill="url(#lens)" stroke="#1a1a1a" stroke-width="0.6"/>
<rect x="12" y="7.2" width="6" height="8" fill="url(#lens)" stroke="#1a1a1a" stroke-width="0.6"/>
</svg>
<svg style="position:absolute;left:0;top:0" width="1024" height="425"><g fill="none" stroke="#8e8e8e" stroke-width="1.5">
<path d="M130 79.7 L351 79.7"/>
<path d="M130 79.7 L229.70 79.70 Q234.2 79.7 234.20 84.20 L234.20 88.30 Q234.2 92 237.90 92.00 L237.90 92.00 Q241.6 92 241.60 95.70 L241.60 104.30 Q241.6 108 237.90 108.00 L237.90 108.00 Q234.2 108 234.20 111.70 L234.20 270.20 Q234.2 274.7 238.70 274.70 L269 274.7"/>
<path d="M130 159.7 L216.60 159.70 Q221.1 159.7 221.10 155.20 L221.10 105.40 Q221.1 100.9 225.60 100.90 L352 100.9"/>
<path d="M130 159.7 L217.10 159.70 Q221.1 159.7 221.10 163.70 L221.10 394.30 Q221.1 398.3 225.10 398.30 L242.30 398.30 Q246.1 398.3 246.10 394.50 L246.10 394.50 Q246.1 390.7 249.90 390.70 L252.10 390.70 Q256 390.7 256.00 394.60 L256.00 394.60 Q256 398.5 259.90 398.50 L269 398.5"/>
<path d="M130 235.8 L143.40 235.80 Q148.4 235.8 148.40 240.80 L148.40 262.60 Q148.4 267.6 143.40 267.60 L34.50 267.60 Q29.5 267.6 29.50 272.60 L29.50 331.15 Q29.5 335.4 33.75 335.40 L38 335.4"/>
<path d="M190.5 324.5 L199.40 324.50 Q203.9 324.5 203.90 329.00 L203.90 341.30 Q203.9 345.8 208.40 345.80 L212.00 345.80 Q216.5 345.8 216.50 341.30 L216.50 338.50 Q216.5 334 221.00 334.00 L224.40 334.00 Q228.9 334 228.90 338.50 L228.90 341.30 Q228.9 345.8 233.40 345.80 L269 345.8"/>
<path d="M427.5 263.9 L445.80 263.90 Q451.3 263.9 451.30 269.40 L451.30 291.50 Q451.3 297 445.80 297.00 L256.30 297.00 Q250.8 297 250.80 302.50 L250.80 330.00 Q250.8 335.5 256.30 335.50 L269 335.5"/>
<path d="M421.5 324.6 L458.90 324.60 Q461.5 324.6 461.50 327.20 L461.50 364.20 Q461.5 366.8 464.10 366.80 L474.30 366.80 Q476.9 366.8 476.90 364.20 L476.90 364.20 Q476.9 361.6 479.50 361.60 L485.60 361.60 Q488.2 361.6 488.20 364.20 L488.20 364.20 Q488.2 366.8 490.80 366.80 L508 366.8"/>
<path d="M421.5 324.6 L457.00 324.60 Q461.5 324.6 461.50 329.10 L461.50 362.30 Q461.5 366.8 457.00 366.80 L254.70 366.80 Q250.2 366.8 250.20 371.30 L250.20 404.80 Q250.2 409.3 254.70 409.30 L269 409.3"/>
<path d="M426 398.4 L478.30 398.40 Q482.8 398.4 482.80 393.90 L482.80 329.10 Q482.8 324.6 487.30 324.60 L508 324.6"/>
<path d="M747 324.7 L756.70 324.70 Q761.2 324.7 761.20 320.20 L761.20 180.20 Q761.2 175.7 765.70 175.70 L787 175.7"/>
<path d="M747 335.4 L787 335.4"/>
<path d="M942 324.6 L1006.30 324.60 Q1010.8 324.6 1010.80 320.10 L1010.80 45.70 Q1010.8 41.2 1006.30 41.20 L325.30 41.20 Q320.8 41.2 320.80 45.70 L320.80 67.75 Q320.8 71.5 324.55 71.50 L324.55 71.50 Q328.3 71.5 328.30 75.25 L328.30 83.75 Q328.3 87.5 324.55 87.50 L324.55 87.50 Q320.8 87.5 320.80 91.25 L320.80 96.40 Q320.8 100.9 325.30 100.90 L352 100.9"/>
<path d="M515.7 79.5 L787 79.5"/>
</g></svg>
</div></body></html>
